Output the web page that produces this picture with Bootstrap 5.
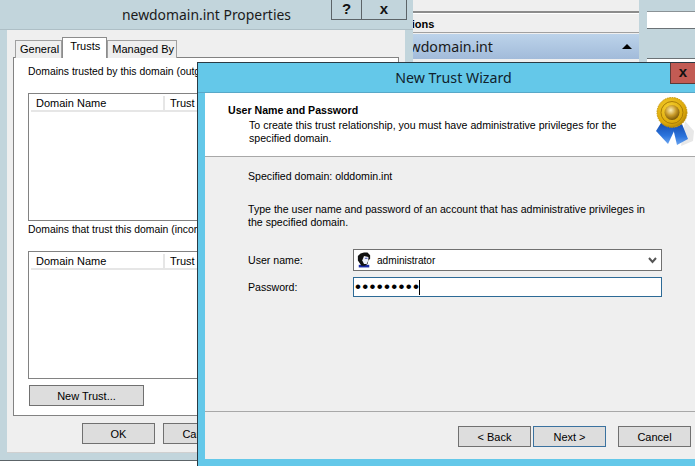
<!DOCTYPE html>
<html lang="en">
<head>
    <meta charset="UTF-8">
    <title>New Trust Wizard</title>
    <link href="https://cdn.jsdelivr.net/npm/bootstrap@5.3.0/dist/css/bootstrap.min.css" rel="stylesheet">
    <style>
        html, body { height: 466px; }
        body {
            width: 695px;
            position: relative;
            overflow: hidden;
            background: #fff;
            color: #000;
            font-family: "Liberation Sans", Arial, sans-serif;
            font-size: 10.6px;
            line-height: 13px;
        }
        /* windows on the desktop */
        .win-far { position: absolute; left: 639px; top: 0; width: 56px; height: 62px; background: #c2d5dc; }
        .far-field { position: absolute; left: 8px; right: 0; top: 11px; height: 18px; background: #fff; border-top: 1px solid #8a9296; border-bottom: 1px solid #6b7276; }
        .far-line { position: absolute; left: 8px; right: 0; top: 58px; height: 4px; background: #fff; border-top: 1px solid #6b7276; }
        .win-mmc { position: absolute; left: 340px; top: 0; width: 299px; height: 62px; background: #efefef; }
        .mmc-rule { height: 13px; border-bottom: 2px solid #8c8c8c; }
        .mmc-head { height: 20px; padding: 4px 0 0 54px; font-weight: 700; font-size: 11px; border-bottom: 1px solid #a0a0a0; border-top: 1px solid #fff; }
        .mmc-band { height: 25px; margin-top: 1px; padding-left: 53px; font-family: "Noto Sans", sans-serif; font-size: 14.2px; line-height: 24px; color: #1a1a1a; background: linear-gradient(#bcd3ea, #a2bbda); }
        .mmc-arrow { margin-right: 7px; width: 0; height: 0; border-left: 5px solid transparent; border-right: 5px solid transparent; border-bottom: 5px solid #000; }

        .win-back { position: absolute; left: 0; top: 0; width: 413px; height: 461px; background: #c2d5dc; border-bottom: 1px solid #5c6468; padding: 0 8px 7px 7px; }
        .back-title { height: 30px; font-family: "Noto Sans", sans-serif; font-size: 13.9px; color: #1a1a1a; margin-left: -7px; margin-right: -8px; border-bottom: 1px solid #aebfc6; }
        .cap-btns { position: absolute; right: 6px; top: -1px; }
        .cap-btn { height: 21px; border: 1px solid #5c6468; background: #c2d5dc; font-family: "Liberation Sans", sans-serif; font-weight: 700; font-size: 15px; line-height: 18px; text-align: center; color: #111; }
        .cap-help { width: 30px; border-right: 0; }
        .cap-close { width: 46px; }
        .back-client { height: 423px; background: #efefef; padding: 7px 6px 0; border-bottom: 1px solid #d0d0d0; }
        .tab-strip { height: 21px; padding-left: 2px; }
        .tab-item { height: 18px; margin-top: 3px; padding: 2px 2px 0 4px; border: 1px solid #a0a0a0; border-bottom: 0; background: #efefef; font-size: 11px; }
        .tab-item.is-on { height: 21px; margin-top: 0; padding-top: 2px; background: #fff; border-color: #8c8c8c; position: relative; z-index: 2; padding-left: 7px; padding-right: 6px; }
        .tab-page { height: 359px; margin-top: -1px; border: 1px solid #828282; background: #fff; padding: 7px 14px 0; font-size: 10.4px; }
        .domain-list { margin-top: 15px; height: 128px; border: 1px solid #828282; background: #fff; padding: 2px; }
        .domain-list.second { margin-top: 15px; }
        .label-second { margin-top: 2px; }
        .list-head { height: 16px; border-bottom: 2px solid #e6e6e6; }
        .list-col { padding: 1px 0 0 5px; border-right: 2px solid #e6e6e6; font-size: 11px; }
        .list-col.name { width: 134px; }
        .win-btn { display: block; height: 21px; padding: 0; border: 1px solid #707070; border-radius: 0; background: #ddd; color: #000; font-size: 11px; line-height: 18px; }
        .btn-newtrust { width: 115px; margin: 6px 0 0 1px; }
        .back-foot { padding: 7px 0 0 69px; gap: 8px; }
        .btn-wide { width: 73px; }

        .win-front { position: absolute; left: 197px; top: 62px; width: 498px; height: 404px; background: #64c8e9; border-left: 1px solid #2a3a44; border-top: 1px solid #2a3a44; padding: 0 0 7px 7px; }
        .front-title { height: 30px; padding-left: 14px; font-family: "Noto Sans", sans-serif; font-size: 14.2px; color: #10222c; margin-left: -7px; border-bottom: 1px solid #58a8c8; }
        .front-close { position: absolute; right: 0; top: 0; width: 25px; height: 21px; background: #c25b54; border: 1px solid #5c3a38; border-top: 0; border-right: 0; font-family: "Liberation Sans", sans-serif; font-weight: 700; font-size: 15px; line-height: 18px; text-align: center; color: #111; }
        .wiz-head { height: 64px; background: #fff; border-bottom: 1px solid #a8a8a8; padding: 11px 0 0 23px; position: relative; }
        .wiz-head h1 { font-size: 10.6px; line-height: 13px; font-weight: 700; margin: 0; }
        .wiz-head p { margin: 2px 0 0 21px; width: 380px; }
        .wiz-medal { position: absolute; left: 450px; top: 4px; }
        .wiz-body { height: 255px; background: #efefef; border-bottom: 1px solid #a8a8a8; padding: 9px 0 0 43px; }
        .wiz-body p { margin: 0; }
        .gap-first { margin-top: 20px !important; width: 410px; }
        .form-rows { margin-top: 20px; }
        .form-row-a { margin-bottom: 6px; }
        .form-lbl { width: 105px; }
        .win-combo { width: 309px; height: 22px; border: 1px solid #707070; background: #fff; padding: 0 4px 0 3px; }
        .combo-name { margin-left: 6px; font-size: 10.1px; }
        .win-pass { width: 309px; height: 20px; border: 1px solid #2d6a96; background: #fff; padding-left: 1px; font-size: 17px; letter-spacing: 1.3px; line-height: 18px; }
        .pass-caret { width: 1px; height: 15px; background: #000; margin-left: -1px; }
        .wiz-foot { background: #efefef; height: 47px; padding: 14px 0 0 253px; }
        .btn-wiz { width: 73px; }
        .btn-next { margin-left: 2px; border-color: #3b729f; }
        .btn-cancel { margin-left: 12px; }
    </style>
</head>
<body>
    <div class="win-far">
        <div class="far-field"></div>
        <div class="far-line"></div>
    </div>

    <div class="win-mmc">
        <div class="mmc-rule"></div>
        <div class="mmc-head">Actions</div>
        <div class="mmc-band d-flex align-items-center justify-content-between">
            <span>newdomain.int</span>
            <span class="mmc-arrow"></span>
        </div>
    </div>

    <div class="win-back">
        <div class="back-title d-flex align-items-center justify-content-center position-relative">
            newdomain.int Properties
            <div class="cap-btns d-flex">
                <div class="cap-btn cap-help">?</div>
                <div class="cap-btn cap-close">x</div>
            </div>
        </div>
        <div class="back-client">
            <div class="tab-strip d-flex">
                <div class="tab-item">General</div>
                <div class="tab-item is-on">Trusts</div>
                <div class="tab-item">Managed By</div>
            </div>
            <div class="tab-page">
                <div>Domains trusted by this domain (outgoing trusts):</div>
                <div class="domain-list">
                    <div class="list-head d-flex">
                        <div class="list-col name">Domain Name</div>
                        <div class="list-col">Trust Type</div>
                    </div>
                </div>
                <div class="label-second">Domains that trust this domain (incoming trusts):</div>
                <div class="domain-list second">
                    <div class="list-head d-flex">
                        <div class="list-col name">Domain Name</div>
                        <div class="list-col">Trust Type</div>
                    </div>
                </div>
                <button type="button" class="btn win-btn btn-newtrust">New Trust...</button>
            </div>
            <div class="back-foot d-flex">
                <button type="button" class="btn win-btn btn-wide">OK</button>
                <button type="button" class="btn win-btn btn-wide">Cancel</button>
            </div>
        </div>
    </div>

    <div class="win-front">
        <div class="front-title d-flex align-items-center justify-content-center position-relative">
            New Trust Wizard
            <div class="front-close">x</div>
        </div>
        <div class="wiz-head">
            <h1>User Name and Password</h1>
            <p>To create this trust relationship, you must have administrative privileges for the specified domain.</p>
            <svg class="wiz-medal" width="40" height="52" viewBox="0 0 40 52">
                <defs>
                    <radialGradient id="goldOuter" cx=".4" cy=".35" r=".75">
                        <stop offset="0" stop-color="#f6d030"/>
                        <stop offset=".7" stop-color="#dca808"/>
                        <stop offset="1" stop-color="#9a7004"/>
                    </radialGradient>
                    <radialGradient id="goldInner" cx=".42" cy=".35" r=".65">
                        <stop offset="0" stop-color="#fbeeb8"/>
                        <stop offset=".55" stop-color="#c89a28"/>
                        <stop offset="1" stop-color="#7a5808"/>
                    </radialGradient>
                    <linearGradient id="ribbonBlue" x1="0" y1="0" x2="0" y2="1">
                        <stop offset="0" stop-color="#144cb0"/>
                        <stop offset=".6" stop-color="#2c74dc"/>
                        <stop offset="1" stop-color="#6aa4f0"/>
                    </linearGradient>
                </defs>
                <path d="M30 24 L39 34 L38 44 L26 49 Z" fill="#e8e8e8"/>
                <path d="M6 26 L1 34 L13 47 L21 30 Z" fill="url(#ribbonBlue)"/>
                <path d="M18 31 L22 48 L33 42 L27 27 Z" fill="url(#ribbonBlue)"/>
                <circle cx="17" cy="15.500" r="15" fill="url(#goldOuter)" stroke="#c49408" stroke-width="1" stroke-dasharray="1.500 1"/>
                <circle cx="17" cy="15.500" r="11" fill="none" stroke="#a87c08" stroke-width="1"/>
                <circle cx="17" cy="15.500" r="7.500" fill="url(#goldInner)"/>
            </svg>
        </div>
        <div class="wiz-body">
            <p class="mt-1">Specified domain: olddomin.int</p>
            <p class="gap-first">Type the user name and password of an account that has administrative privileges in the specified domain.</p>
            <div class="form-rows">
                <div class="form-row-a d-flex align-items-center">
                    <div class="form-lbl">User name:</div>
                    <div class="win-combo d-flex align-items-center">
                        <svg width="14" height="16" viewBox="0 0 16 17">
                            <path d="M2 14h12v3H2z" fill="#1a2aa0"/>
                            <path d="M1 4 L4 1 L8 0 H12 L15 3 V7 L13 9 L12 13 L9 15 H5 L3 12 L1 9 Z" fill="#111"/>
                            <path d="M8 4 L13 5 V9 L11 13 H8 L6 9 Z" fill="#eef0f8"/>
                            <path d="M9 6h3v1H9z" fill="#3040b0"/>
                        </svg>
                        <span class="combo-name flex-grow-1">administrator</span>
                        <svg width="9" height="7" viewBox="0 0 9 7"><path d="M1 1 L4.500 5 L8 1" fill="none" stroke="#555" stroke-width="2"/></svg>
                    </div>
                </div>
                <div class="form-row-a d-flex align-items-center">
                    <div class="form-lbl">Password:</div>
                    <div class="win-pass d-flex align-items-center">
                        <span>•••••••••</span>
                        <span class="pass-caret"></span>
                    </div>
                </div>
            </div>
        </div>
        <div class="wiz-foot d-flex">
            <button type="button" class="btn win-btn btn-wiz">&lt; Back</button>
            <button type="button" class="btn win-btn btn-wiz btn-next">Next &gt;</button>
            <button type="button" class="btn win-btn btn-wiz btn-cancel">Cancel</button>
        </div>
    </div>
    <script src="https://cdn.jsdelivr.net/npm/bootstrap@5.3.0/dist/js/bootstrap.bundle.min.js"></script>
</body>
</html>
